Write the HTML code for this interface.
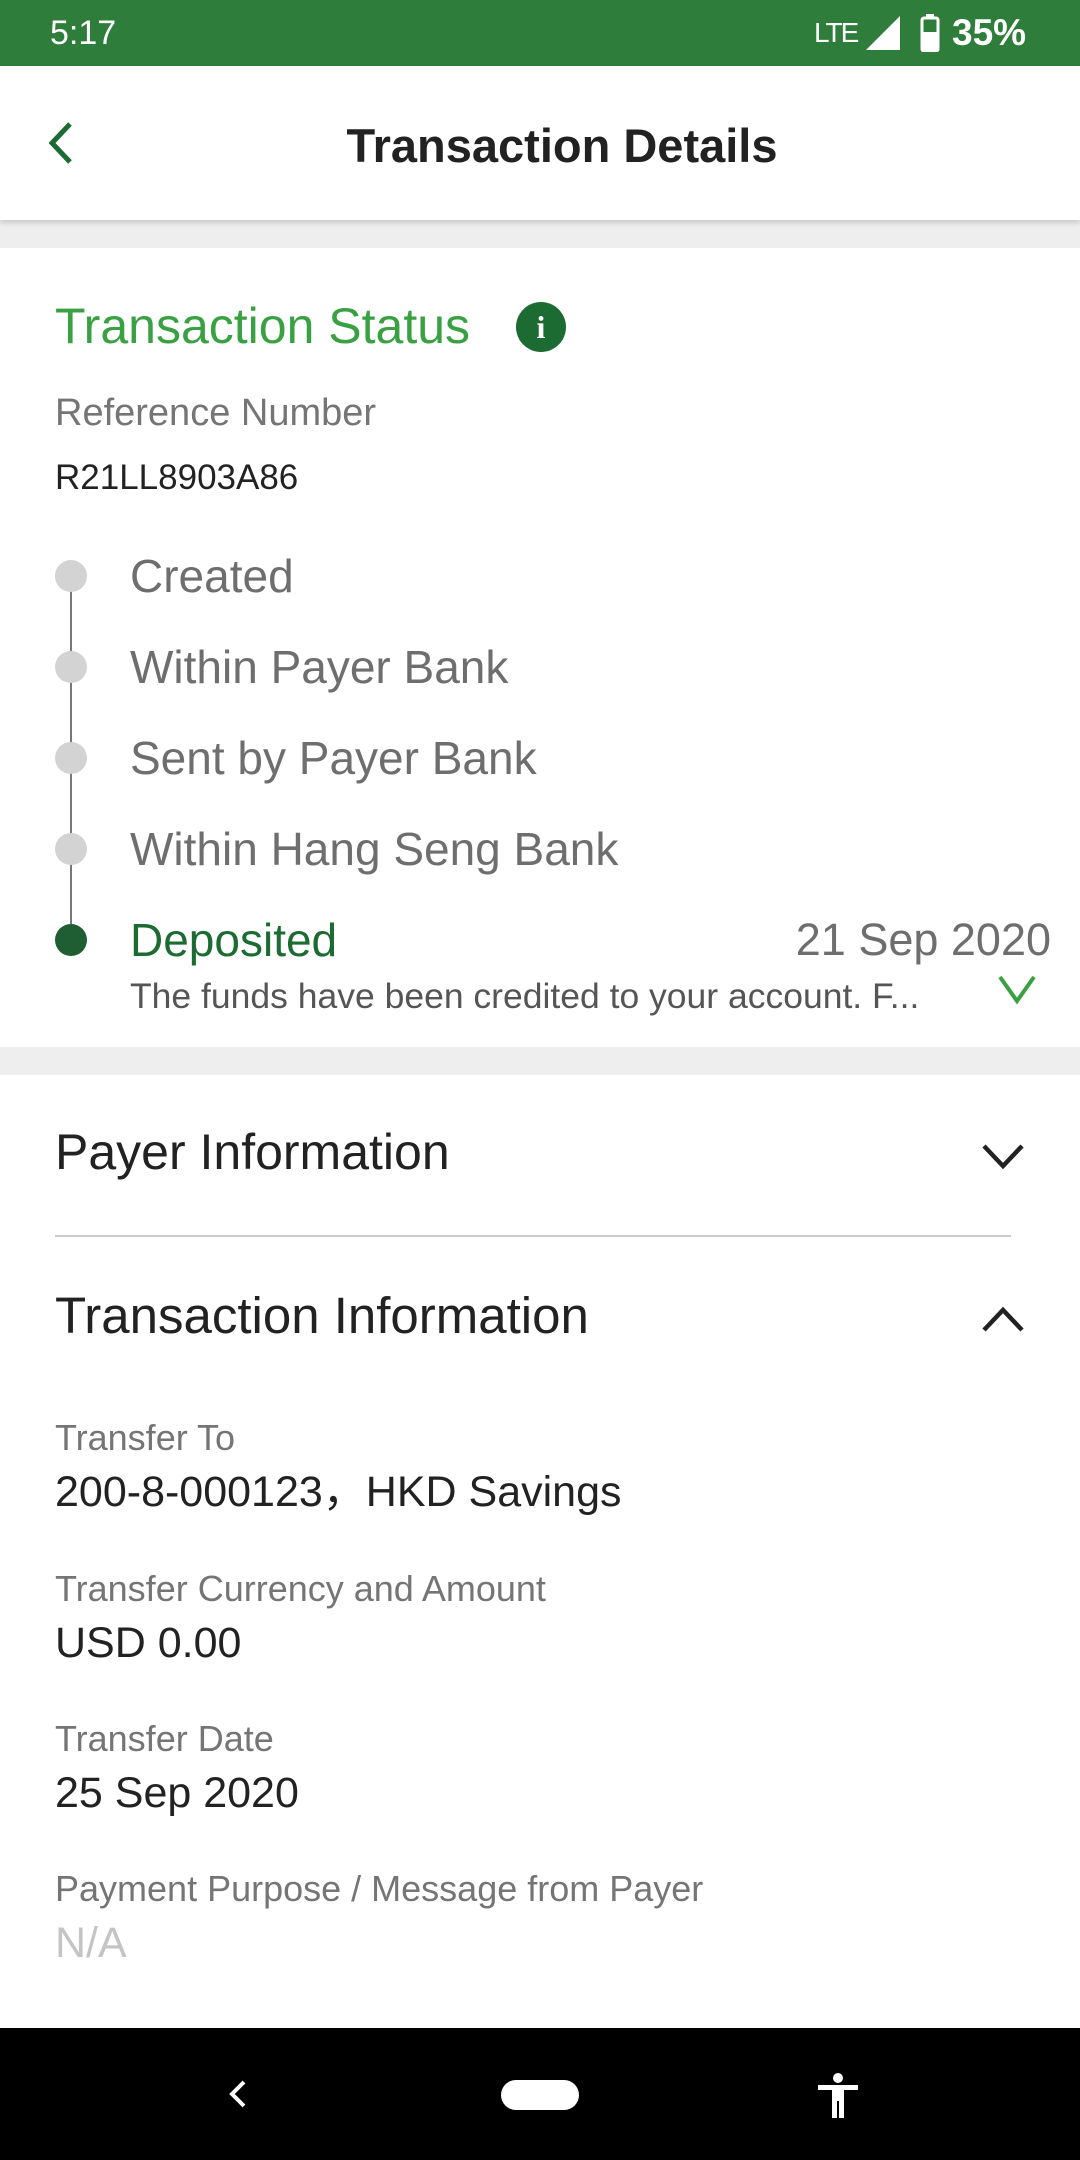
<!DOCTYPE html>
<html><head><meta charset="utf-8"><style>
*{margin:0;padding:0;box-sizing:border-box}
body{width:1080px;height:2160px;position:relative;background:#fff;font-family:"Liberation Sans",Roboto,sans-serif;overflow:hidden}
.a{position:absolute;white-space:nowrap}
.t{line-height:60px;height:60px}
</style></head><body>
<div class="a" style="left:0;top:0;width:1080px;height:66px;background:#2e7d3a"></div>
<div class="a t" style="left:50px;top:3px;color:#fff;font-size:34px">5:17</div>
<div class="a t" style="left:814px;top:3px;color:#fff;font-size:28px;letter-spacing:-2px">LTE</div>
<svg class="a" style="left:866px;top:16px" width="34" height="34"><polygon points="34,0 34,34 0,34" fill="#fff"/></svg>
<svg class="a" style="left:920px;top:14px" width="20" height="38"><rect x="6" y="0" width="8" height="4" fill="#fff"/><rect x="2" y="4" width="16" height="33" rx="2" fill="none" stroke="#fff" stroke-width="3"/><rect x="2" y="18" width="16" height="19" fill="#fff"/></svg>
<div class="a t" style="left:952px;top:3px;color:#fff;font-size:37px;font-weight:bold;">35%</div>

<div class="a" style="left:0;top:66px;width:1080px;height:154px;background:#fff;box-shadow:0 3px 5px rgba(0,0,0,.15);z-index:2"></div>
<svg class="a" style="left:42px;top:120px;z-index:3" width="36" height="46"><polyline points="28,4 10,23 28,42" fill="none" stroke="#1b6b32" stroke-width="5"/></svg>
<div class="a t" style="left:0;width:1124px;text-align:center;top:116px;font-size:47px;font-weight:bold;color:#222;z-index:3">Transaction Details</div>

<div class="a" style="left:0;top:220px;width:1080px;height:28px;background:#eee"></div>
<div class="a t" style="left:55px;top:296px;font-size:50px;color:#3aa142">Transaction Status</div>
<div class="a" style="left:516px;top:302px;width:50px;height:50px;border-radius:50%;background:#1b6b32;color:#fff;font:bold 32px/50px 'Liberation Serif',serif;text-align:center">i</div>
<div class="a t" style="left:55px;top:383px;font-size:38px;color:#757575">Reference Number</div>
<div class="a t" style="left:55px;top:448px;font-size:35px;color:#222">R21LL8903A86</div>

<div class="a" style="left:70px;top:576px;width:2px;height:364px;background:#777"></div>
<div class="a" style="left:55px;top:560px;width:32px;height:32px;border-radius:50%;background:#d3d3d3"></div>
<div class="a" style="left:55px;top:651px;width:32px;height:32px;border-radius:50%;background:#d3d3d3"></div>
<div class="a" style="left:55px;top:742px;width:32px;height:32px;border-radius:50%;background:#d3d3d3"></div>
<div class="a" style="left:55px;top:833px;width:32px;height:32px;border-radius:50%;background:#d3d3d3"></div>
<div class="a" style="left:55px;top:924px;width:32px;height:32px;border-radius:50%;background:#1f5e33"></div>
<div class="a t" style="left:130px;top:546px;font-size:46px;color:#6e6e6e">Created</div>
<div class="a t" style="left:130px;top:637px;font-size:46px;color:#6e6e6e">Within Payer Bank</div>
<div class="a t" style="left:130px;top:728px;font-size:46px;color:#6e6e6e">Sent by Payer Bank</div>
<div class="a t" style="left:130px;top:819px;font-size:46px;color:#6e6e6e">Within Hang Seng Bank</div>
<div class="a t" style="left:130px;top:910px;font-size:46px;color:#1b6b32">Deposited</div>
<div class="a t" style="right:29px;top:910px;font-size:45px;color:#6e6e6e">21 Sep 2020</div>
<div class="a t" style="left:130px;top:966px;font-size:35.5px;color:#555">The funds have been credited to your account. F...</div>
<svg class="a" style="left:996px;top:972px" width="42" height="34"><polyline points="4,5 21,29 38,5" fill="none" stroke="#3aa142" stroke-width="4"/></svg>

<div class="a" style="left:0;top:1047px;width:1080px;height:28px;background:#eee"></div>
<div class="a t" style="left:55px;top:1122px;font-size:50px;color:#222">Payer Information</div>
<svg class="a" style="left:980px;top:1140px" width="46" height="32"><polyline points="4,6 23,26 42,6" fill="none" stroke="#222" stroke-width="4.5"/></svg>
<div class="a" style="left:55px;top:1235px;width:956px;height:2px;background:#ccc"></div>
<div class="a t" style="left:55px;top:1286px;font-size:51px;color:#222">Transaction Information</div>
<svg class="a" style="left:980px;top:1304px" width="46" height="32"><polyline points="4,26 23,6 42,26" fill="none" stroke="#222" stroke-width="4.5"/></svg>

<div class="a t" style="left:55px;top:1408px;font-size:36px;color:#757575">Transfer To</div>
<div class="a t" style="left:55px;top:1462px;font-size:43px;color:#222">200-8-000123，HKD Savings</div>
<div class="a t" style="left:55px;top:1559px;font-size:36px;color:#757575">Transfer Currency and Amount</div>
<div class="a t" style="left:55px;top:1613px;font-size:43px;color:#222">USD 0.00</div>
<div class="a t" style="left:55px;top:1709px;font-size:36px;color:#757575">Transfer Date</div>
<div class="a t" style="left:55px;top:1763px;font-size:43px;color:#222">25 Sep 2020</div>
<div class="a t" style="left:55px;top:1859px;font-size:36px;color:#757575">Payment Purpose / Message from Payer</div>
<div class="a t" style="left:55px;top:1913px;font-size:43px;color:#c4c4c4">N/A</div>

<div class="a" style="left:0;top:2028px;width:1080px;height:132px;background:#000"></div>
<svg class="a" style="left:226px;top:2078px" width="24" height="32"><polyline points="18,4 6,16 18,28" fill="none" stroke="#fff" stroke-width="4"/></svg>
<div class="a" style="left:501px;top:2080px;width:78px;height:30px;border-radius:15px;background:#fff"></div>
<svg class="a" style="left:816px;top:2072px" width="44" height="46" fill="#fff"><circle cx="22" cy="6" r="5"/><rect x="2" y="13" width="40" height="5"/><rect x="16" y="13" width="12" height="16"/><rect x="16" y="26" width="5" height="20"/><rect x="23" y="26" width="5" height="20"/></svg>
</body></html>
